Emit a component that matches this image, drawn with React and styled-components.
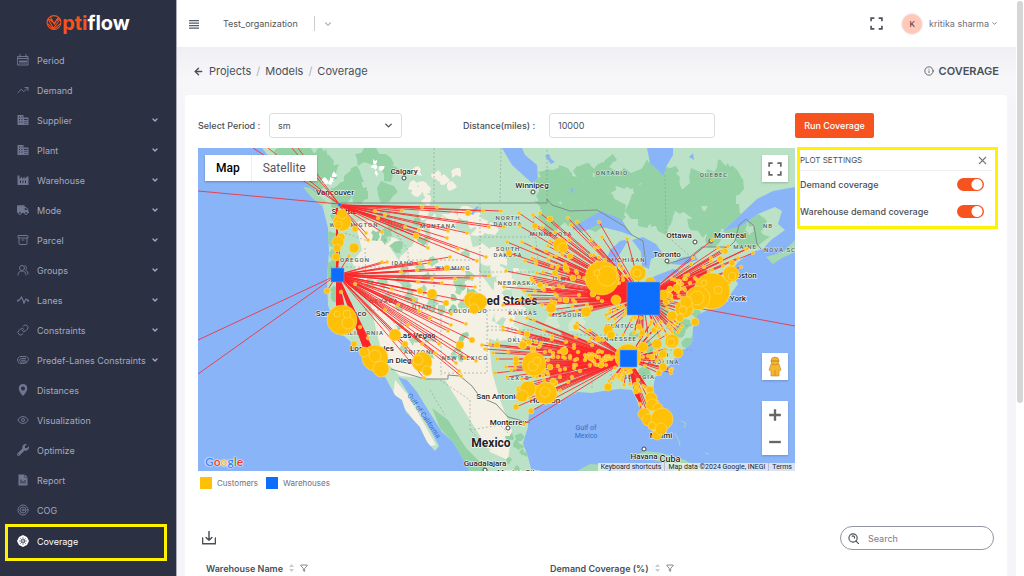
import React from "react";
import styled, { createGlobalStyle, css } from "styled-components";
import { Filter, ChevronDown, Link as LinkIcon, Target, TrendingUp, Archive, Eye, Info, X, ArrowLeft } from "lucide-react";
import { FaTruck, FaWrench } from "react-icons/fa";

const Global = createGlobalStyle`
  * { box-sizing: border-box; }
  body { margin: 0; background: #f5f5f9; font-family: Inter, "Liberation Sans", sans-serif; font-size: 9px; color: #495057; }
  button, input, select { font: inherit; color: inherit; }
  a { color: inherit; text-decoration: none; }
`;

const orange = "#f7531f";
const yellow = "#fff200";

const Shell = styled.div`
  display: flex;
  height: 100vh;
  overflow: hidden;
`;
const Sidebar = styled.nav`
  flex: 0 0 177px;
  background: #2b3042;
  border-right: 1px solid #a9acb8;
  color: #a3aac2;
`;
const Brand = styled.a`
  display: flex;
  align-items: center;
  justify-content: center;
  height: 45px;
  font-size: 20px;
  font-weight: 700;
  line-height: 24px;
  color: #fff;
`;
const BrandAccent = styled.span`
  color: ${orange};
`;
const Menu = styled.ul`
  list-style: none;
  margin: 0;
  padding: 0;
`;
const Item = styled.li`
  ${(p) => p.$active && css`
    margin: -1px 9px 0 5px;
    border: 3px solid ${yellow};
    padding-bottom: 3px;
    color: #fff;
  `}
`;
const ItemLink = styled.a`
  display: flex;
  align-items: center;
  height: ${(p) => (p.$active ? 28 : 30)}px;
  padding: 0 17px 0 ${(p) => (p.$active ? 9 : 17)}px;
  font-size: 9px;
  white-space: nowrap;
  svg:first-child { color: ${(p) => (p.$active ? "#fff" : "#6f7690")}; }
`;
const ItemText = styled.span`
  flex: 1;
  margin-left: 8px;
`;

const Main = styled.div`
  flex: 1;
  min-width: 0;
  background: linear-gradient(#f0f0f4 47px, #f7f7fa 80px, #f5f5f9 110px);
`;
const Topbar = styled.header`
  display: flex;
  align-items: center;
  height: 47px;
  padding: 0 18px 0 12px;
  background: #fff;
`;
const IconButton = styled.button`
  display: grid;
  place-items: center;
  border: 0;
  padding: 0;
  background: none;
  cursor: pointer;
`;
const OrgPicker = styled.button`
  display: flex;
  align-items: center;
  gap: 8px;
  margin-left: 24px;
  border: 0;
  padding: 0;
  background: none;
  color: #555;
`;
const Divider = styled.span`
  width: 1px;
  height: 15px;
  margin-left: 8px;
  background: #ccc;
`;
const Spacer = styled.span`
  flex: 1;
`;
const UserMenu = styled.button`
  display: flex;
  align-items: center;
  margin-left: 19px;
  border: 0;
  padding: 0;
  background: none;
  color: #6c7080;
`;
const UserName = styled.span`
  margin-right: 2px;
`;
const Avatar = styled.span`
  display: grid;
  place-items: center;
  width: 20px;
  height: 20px;
  margin-right: 7px;
  border-radius: 50%;
  background: #ffc8b8;
  color: #333;
  font-size: 8px;
  box-shadow: 0 0 0 1px #f0f0f2;
`;
const PageHead = styled.div`
  display: flex;
  align-items: center;
  height: 48px;
  padding: 0 17px 0 16px;
`;
const Crumbs = styled.nav`
  display: flex;
  align-items: center;
  gap: 5px;
  flex: 1;
  font-size: 11px;
`;
const Slash = styled.span`
  color: #adb0b8;
`;
const Title = styled.h1`
  display: flex;
  align-items: center;
  gap: 5px;
  margin: 0;
  font-size: 11px;
  font-weight: 600;
`;
const Card = styled.main`
  margin: 0 9px 0 8px;
  padding: 18px 9px 0 13px;
  min-height: 100vh;
  border-radius: 3px;
  background: #fff;
`;
const Toolbar = styled.form`
  display: grid;
  grid-template-columns: 265fr 332fr 203fr;
  margin-bottom: 10px;
`;
const Field = styled.div`
  display: flex;
  align-items: center;
`;
const Label = styled.label`
  flex: 0 0 ${(p) => p.$w}px;
  font-size: 9px;
  font-weight: 500;
`;
const SelectWrap = styled.span`
  position: relative;
  flex: 0 0 133px;
  svg { position: absolute; right: 8px; top: 7px; pointer-events: none; }
`;
const boxStyle = css`
  height: 25px;
  border: 1px solid #dcdde1;
  border-radius: 3px;
  padding: 0 8px;
  background: #fff;
  font-size: 9px;
`;
const Select = styled.select`
  ${boxStyle}
  display: block;
  width: 100%;
  appearance: none;
`;
const Input = styled.input`
  ${boxStyle}
  width: 166px;
`;
const RunButton = styled.button`
  height: 25px;
  width: 79px;
  border: 0;
  border-radius: 2px;
  padding: 0;
  background: ${orange};
  color: #fff;
  font-size: 9px;
  font-weight: 500;
`;
const PlotArea = styled.section`
  display: grid;
  grid-template-columns: 597fr 203fr;
  align-items: start;
`;
const MapFrame = styled.div`
  position: relative;
  height: 323px;
  overflow: hidden;
  background: #8ab4f8;
  font-family: Roboto, "Liberation Sans", sans-serif;
  > svg { display: block; width: 100%; height: 100%; }
`;
const MapTypes = styled.div`
  position: absolute;
  top: 7px;
  left: 7px;
  display: flex;
  background: #fff;
  box-shadow: 0 1px 2px #0004;
`;
const MapType = styled.button`
  height: 26px;
  border: 0;
  border-left: ${(p) => (p.$active ? "0" : "1px solid #eee")};
  padding: 0 11px;
  background: #fff;
  font-size: 12px;
  font-weight: ${(p) => (p.$active ? 500 : 400)};
  color: ${(p) => (p.$active ? "#000" : "#565656")};
`;
const MapControls = styled.div`
  position: absolute;
  top: 7px;
  right: 7px;
  bottom: 16px;
  display: flex;
  flex-direction: column;
`;
const MapButton = styled.button`
  display: grid;
  place-items: center;
  width: 26px;
  height: 27px;
  margin-top: ${(p) => p.$top || 0};
  border: 0;
  padding: 0;
  background: #fff;
  color: #666;
  box-shadow: 0 1px 2px #0003;
`;
const Attribution = styled.div`
  position: absolute;
  right: 0;
  bottom: 0;
  display: flex;
  height: 8px;
  background: #f5f5f5b8;
  color: #222;
  font-size: 7px;
  line-height: 8px;
  white-space: nowrap;
  a { padding: 0 3px; }
  a + a { border-left: 1px solid #bbc; }
`;
const GoogleMark = styled.a`
  position: absolute;
  left: 7px;
  bottom: 1px;
  font-family: Lato, sans-serif;
  font-size: 12px;
  line-height: 16px;
  font-weight: 700;
  text-shadow: 0 0 1px #fff, 0 0 1px #fff, 0 0 2px #fff;
`;
const Letter = styled.span`
  color: ${(p) => p.$c};
`;
const Settings = styled.aside`
  margin: -1px 0 0 2px;
  border: 3px solid ${yellow};
  height: 82px;
  padding: 0 11px 0 0;
`;
const SettingsHead = styled.div`
  display: flex;
  align-items: center;
  justify-content: space-between;
  height: 21px;
  margin-right: -8px;
  padding-right: 3px;
  border-bottom: 1px solid #eeeff2;
  font-size: 8px;
  svg { color: #777; }
`;
const SwitchRow = styled.label`
  display: flex;
  align-items: center;
  justify-content: space-between;
  height: 27px;
  font-size: 9px;
  font-weight: 500;
`;
const Switch = styled.input`
  appearance: none;
  width: 27px;
  height: 13px;
  margin: 0;
  border-radius: 7px;
  background: radial-gradient(circle at 20px 50%, #fff 5px, ${orange} 6px);
`;
const Legend = styled.div`
  display: flex;
  gap: 8px;
  padding: 6px 2px 0;
  font-size: 8px;
  color: #6c7080;
`;
const LegendItem = styled.span`
  display: flex;
  align-items: center;
  gap: 5px;
  &::before { content: ""; width: 12px; height: 12px; background: ${(p) => p.$c}; }
`;
const TableTools = styled.div`
  display: flex;
  align-items: center;
  justify-content: space-between;
  margin-top: 37px;
  padding: 0 4px;
`;
const SearchBox = styled.label`
  display: flex;
  align-items: center;
  gap: 9px;
  width: 154px;
  height: 24px;
  border: 1px solid #9295a4;
  border-radius: 12px;
  padding: 0 7px;
`;
const SearchInput = styled.input`
  min-width: 0;
  flex: 1;
  border: 0;
  padding: 0;
  outline: 0;
  background: none;
  font-size: 9px;
  &::placeholder { color: #777b88; }
`;
const Table = styled.table`
  width: 100%;
  margin-top: 9px;
  border-collapse: collapse;
  table-layout: fixed;
`;
const Th = styled.th`
  width: ${(p) => p.$w};
  height: 18px;
  padding: 0 8px;
  text-align: left;
  font-size: 9px;
  font-weight: 600;
`;
const ThInner = styled.span`
  display: flex;
  align-items: center;
  gap: 6px;
`;
const ScrollTrack = styled.div`
  flex: 0 0 8px;
  padding: 1px;
  background: #fff;
`;
const ScrollThumb = styled.div`
  height: 70%;
  border-radius: 3px;
  background: #d6d6d6;
`;

const Svg = ({ s = 12, children, ...rest }) => (
  <svg width={s} height={s} viewBox="0 0 24 24" fill="none" stroke="currentColor" strokeWidth="2" strokeLinecap="round" strokeLinejoin="round" aria-hidden="true" {...rest}>{children}</svg>
);
const CalendarIcon = () => (
  <Svg><path d="M2 5h20v17H2zM6 1v5M18 1v5M2 9h20" /><path d="M6 13v6M10 13v6M14 13v6M18 13v6M5 15h14" /></Svg>
);
const BuildingIcon = () => (
  <Svg stroke="none"><path fill="currentColor" fillRule="evenodd" d="M1 2h12v5h10v15H1zM4 5v2h2V5zM9 5v2h2V5zM4 10v2h2v-2zM9 10v2h2v-2zM4 15v2h2v-2zM9 15v2h2v-2zM14 10v2h7v-2zM14 14v1h7v-1zM14 18v1h7v-1z" /></Svg>
);
const FactoryIcon = () => (
  <Svg stroke="none"><path fill="currentColor" fillRule="evenodd" d="M1 3h4v7l5-5v5l5-5v5l5-5h3v17H1zM6 13v5h2v-5zM11 13v5h2v-5zM16 13v5h2v-5z" /></Svg>
);
const PeopleIcon = () => (
  <Svg><circle cx="10" cy="8" r="5" /><path d="M2 22c0-5 3-8 8-8s8 3 8 8M16 3c4 1 4 7 1 9 4 2 5 5 5 8" /></Svg>
);
const ZigzagIcon = () => (
  <Svg strokeWidth="2.5"><path d="M2 13l3-1 4-6 5 11 4-7 4 3" /><g fill="currentColor"><circle cx="2" cy="13" r="1" /><circle cx="14" cy="17" r="1" /><circle cx="22" cy="13" r="1" /></g></Svg>
);
const ClipIcon = () => (
  <Svg><path d="M20 17c-3 2-8 2-12 2-9 0-9-14 0-14h8c9 0 9 11 0 11H9c-5 0-5-7 0-7h8M9 12.500h8" /></Svg>
);
const ReportIcon = () => (
  <Svg stroke="none"><path fill="currentColor" fillRule="evenodd" d="M3 1h12v6h6v16H3zM7 11v8h2v-8zM11 14v5h2v-5zM15 12v7h2v-7zM16 1l5 5h-5z" /></Svg>
);
const CoverageIcon = () => (
  <Svg stroke="none"><path fill="currentColor" d="M12 0l4 2 4 2 2 4 2 4-2 4-2 4-4 2-4 2-4-2-4-2-2-4-2-4 2-4 2-4 4-2z" /><g stroke="#4d5265" strokeWidth="1.500"><circle cx="12" cy="12" r="3" /><path d="M12 5v4M12 15v4M5 12h4M15 12h4M7 7l3 3M17 7l-3 3M7 17l3-3M17 17l-3-3" /></g></Svg>
);
const CornersIcon = ({ s, w }) => (
  <Svg s={s} strokeWidth={w} strokeLinecap="butt" strokeLinejoin="miter"><path d="M2 8V2h6M16 2h6v6M22 16v6h-6M8 22H2v-6" /></Svg>
);

const icon = 12;
const menu = [
  ["Period", <CalendarIcon />],
  ["Demand", <TrendingUp size={icon} />],
  ["Supplier", <BuildingIcon />, true],
  ["Plant", <BuildingIcon />, true],
  ["Warehouse", <FactoryIcon />, true],
  ["Mode", <FaTruck size={icon} />, true],
  ["Parcel", <Archive size={icon} />, true],
  ["Groups", <PeopleIcon />, true],
  ["Lanes", <ZigzagIcon />, true],
  ["Constraints", <LinkIcon size={icon} />, true],
  ["Predef-Lanes Constraints", <ClipIcon />, true],
  ["Distances", <Svg stroke="none"><path fill="currentColor" fillRule="evenodd" d="M12 0a8.500 8.500 0 0 0-8.500 9C3.500 15 12 24 12 24s8.500-9 8.500-15A8.500 8.500 0 0 0 12 0zM12 5a4 4 0 1 1 0 8 4 4 0 0 1 0-8z" /></Svg>],
  ["Visualization", <Eye size={icon} />],
  ["Optimize", <FaWrench size={icon} />],
  ["Report", <ReportIcon />],
  ["COG", <Target size={icon} />],
  ["Coverage", <CoverageIcon />],
];

/* Map data, in the map drawing's own coordinates */
const hubs = { A: [339, 205], B: [337, 275], C: [643, 298], D: [628, 359] };
const routes = {
  A: [[422,207],[437,207],[402,211],[468,213],[483,211],[501,211],[489,227],[504,227],[467,233],[448,231],[405,227],[419,230],[416,236],[447,238],[428,248],[458,249],[486,257],[477,261],[375,211],[378,218],[385,215],[355,229],[366,233],[368,240],[382,232]],
  B: [[450,257],[420,263],[429,263],[417,270],[401,272],[447,268],[463,269],[489,276],[472,278],[455,279],[432,279],[442,283],[418,282],[475,287],[420,291],[432,294],[475,303],[419,311],[451,314],[451,325],[466,324],[448,331],[439,344],[472,340],[460,345],[456,363],[459,371],[461,376],[465,358],[476,361],[422,344],[435,353],[405,344],[424,378],[398,335],[422,362],[427,371],[382,262],[387,262],[349,256],[341,237],[327,291],[341,292],[355,284],[392,289],[345,320],[375,358],[365,352],[360,327],[368,338],[446,303],[408,325],[414,300],[430,318],[385,310],[398,305]],
  C: [[519,213],[533,215],[540,213],[550,219],[568,218],[571,225],[577,222],[591,240],[599,222],[602,237],[627,239],[520,226],[535,226],[542,227],[555,232],[569,240],[507,242],[522,242],[533,248],[548,246],[525,261],[509,253],[506,271],[531,278],[504,287],[503,305],[536,264],[556,256],[548,260],[537,273],[555,273],[565,270],[524,291],[535,291],[553,288],[520,300],[560,300],[712,240],[728,246],[725,251],[711,258],[693,258],[746,249],[753,253],[747,249],[738,258],[741,267]],
  D: [[482,345],[490,344],[497,345],[493,353],[508,352],[497,359],[495,373],[485,349],[503,327],[511,320],[524,424],[531,411],[516,407],[503,330],[519,332],[527,318],[534,320],[507,377],[506,367],[511,370],[516,363],[546,393],[522,396],[544,330],[548,374],[560,370],[552,336],[540,345],[545,352],[533,349]],
};
const discs = [[342,222,9],[342,214,5],[338,225,4],[341,237,4],[338,242,6],[337,248,4],[336,257,4],[354,248,5],[342,320,15],[348,323,6],[347,314,4],[337,314,3],[375,358,13],[381,369,8],[364,352,5],[375,356,6],[354,344,3],[395,335,6],[422,362,10],[418,360,5],[427,371,5],[460,345,4],[432,294,5],[420,291,3],[472,300,8],[478,302,9],[474,309,5],[534,364,12],[533,366,5],[537,361,4],[528,389,8],[522,396,6],[546,393,11],[545,392,5],[516,407,3],[523,345,4],[529,342,3],[564,351,4],[560,245,7],[563,248,5],[540,285,3],[551,308,5],[586,312,5],[602,278,17],[607,276,10],[597,273,3],[638,273,8],[637,273,4],[650,282,5],[663,295,5],[616,300,5],[712,291,18],[698,298,12],[697,298,7],[684,309,9],[686,302,6],[683,310,4],[704,283,3],[718,290,4],[731,274,8],[732,276,4],[732,263,3],[628,357,13],[650,390,4],[651,398,6],[644,414,6],[652,405,6],[658,408,5],[648,420,6],[662,419,11],[657,435,5],[661,429,6],[652,426,4],[672,341,7],[671,342,4],[657,344,5],[643,347,5],[663,354,4],[678,353,5],[663,367,4],[695,322,4],[608,330,5],[611,335,4],[608,387,4],[672,316,5],[680,318,4],[650,309,5],[677,288,4]];

function makeRandom(seed) {
  let n = seed;
  return () => ((n = (n * 16807) % 2147483647) / 2147483647);
}
const random = makeRandom(4217);
const scatter = (hub, count, a0, a1, r0, r1) => {
  const [hx, hy] = hubs[hub];
  for (let i = 0; i < count; i += 1) {
    const a = ((a0 + random() * (a1 - a0)) * Math.PI) / 180;
    const r = r0 + random() * (r1 - r0);
    routes[hub].push([Math.round(hx + Math.cos(a) * r), Math.round(hy + Math.sin(a) * r)]);
  }
};
scatter("C", 65, 168, 212, 40, 118);
scatter("C", 26, 205, 235, 25, 70);
scatter("C", 40, -36, -8, 25, 95);
scatter("C", 34, -20, 60, 20, 52);
scatter("C", 32, 60, 170, 20, 42);
scatter("D", 58, 153, 195, 45, 115);
scatter("D", 22, 165, 190, 15, 45);
scatter("D", 24, 180, 218, 20, 65);
scatter("D", 28, -60, 25, 15, 48);
scatter("D", 20, 50, 150, 12, 30);
scatter("D", 12, 52, 76, 30, 75);

const patch = (cx, cy, w, h, count, size) =>
  Array.from({ length: count }, () => {
    const x = cx + (random() - 0.5) * w;
    const y = cy + (random() - 0.5) * h;
    const pts = Array.from({ length: 9 }, (_, i) => {
      const a = (i / 9) * Math.PI * 2;
      const r = size * (0.4 + random() * 0.8);
      return `${Math.round(x + Math.cos(a) * r)} ${Math.round(y + Math.sin(a) * r)}`;
    });
    return `M${pts.join("L")}Z`;
  }).join("");
const tan = "#f5f0e4";
const terrain = [
  ["#94d2a5", patch(335, 172, 110, 50, 30, 11)],
  ["#fff", patch(328, 179, 14, 10, 5, 3)],
  ["#fff", patch(380, 165, 12, 20, 5, 3)],
  [tan, patch(440, 185, 55, 30, 11, 6)],
  [tan, "M355 222L362 250L352 262L370 300L376 330L384 360L400 376L445 380L490 452L508 460L512 430L500 400L492 372L488 330L500 300L478 270L470 235L440 222L425 250L400 262L385 240L372 220Z"],
  [tan, patch(445, 240, 110, 65, 34, 9)],
  [tan, patch(500, 310, 40, 80, 24, 9)],
  [tan, "M395 380L408 395L422 420L436 445L430 446L410 415L393 396Z"],
  ["#94d2a5", patch(334, 250, 12, 100, 14, 7)],
  ["#94d2a5", patch(400, 235, 50, 40, 10, 6)],
  ["#a9dab5", patch(425, 280, 110, 60, 26, 6)],
  ["#94d2a5", patch(465, 325, 30, 80, 9, 5)],
  ["#a9dab5", patch(430, 345, 60, 40, 9, 5)],
  ["#94d2a5", patch(640, 197, 190, 55, 75, 14)],
  ["#94d2a5", patch(745, 225, 70, 35, 12, 10)],
  ["#94d2a5", patch(575, 195, 65, 60, 20, 9)],
  ["#bbe2c6", patch(700, 158, 180, 16, 22, 8)],
  ["#94d2a5", patch(660, 345, 70, 90, 16, 8)],
  ["#94d2a5", "M432 408L448 420L466 448L490 472H468L455 445L440 428Z"],
  ["#94d2a5", patch(515, 450, 16, 40, 8, 5)],
  ["#cfe8cf", patch(560, 300, 90, 60, 12, 9)],
];

const land = "M262 148L270 158L285 168L305 182L317 192L323 208L328 228L329 252L327 278L328 305L335 328L352 343L362 353L373 371L385 377L395 395L402 400L406 412L420 427L427 442L435 451L439 446L432 433L423 417L415 403L408 393L398 377L407 380L417 392L428 410L442 432L453 442L462 457L470 472L532 472L528 457L523 443L528 427L529 413L538 407L562 400L578 392L592 393L603 391L620 389L632 390L638 403L642 413L648 425L657 438L667 433L664 420L657 403L653 390L655 377L667 368L678 355L692 343L693 328L697 315L725 302L738 284L731 272L738 262L752 252L763 249L771 240L778 235L785 230L778 224L782 211L775 207L758 214L742 226L722 232L740 215L757 199L773 191L795 187V148Z";
const water = [
  "M647 148L650 163L658 170L663 176L667 165L673 155V148Z",
  "M502 148L512 165L523 175L532 183L538 178L537 165L525 155L522 148Z",
  "M572 229L585 220L601 211L614 216L622 220L632 236L622 232L610 229L597 225L585 231Z",
  "M607 283L604 267L610 250L620 241L629 239L618 257L618 275L613 284Z",
  "M632 240L643 237L656 244L663 254L651 259L649 269L642 266L641 252Z",
  "M643 284L655 276L673 269L680 271L664 280L651 286Z",
  "M671 264L680 258L695 255L698 260L683 265Z",
  "M545 156l4-2 2 5 4 3-4 2zM470 214l7-8 2 1-6 8zM570 190l3-2 1 6zM689 157l4-4 1 7zM770 170l3-4 1 5z",
];
const dashed = "M434 148V203M501 148L500 203M547 150V203M665 175L666 235L690 256M480 203V272M480 237H535M533 213L538 260M480 257V310M480 272H540M395 208V232L408 250V273M408 260H480M434 273V310M408 273V310M365 310H535M365 248L366 290L400 330M441 310V375M487 310V373H441M487 330H535M487 326L515 328V343L540 350M345 233L365 240H387M330 267H408M540 289L590 292M545 310L590 312M540 335H620M590 350H692M592 350V390M611 350V385M643 373L655 378M650 330L692 325M590 270H615M440 380L470 400V430L490 450M470 430L500 425L515 440M430 390L445 415";
const states = [["ONTARIO",612,175],["QUEBEC",714,177],["NB",768,228],["NOVA SC",780,252],["MAINE",745,249],["NORTH",508,220],["DAKOTA",508,226],["MINNESOTA",551,236],["SOUTH",508,251],["DAKOTA",508,257],["MONTANA",438,228],["WASHINGTON",354,227],["OREGON",355,262],["IDAHO",403,265],["WYOMING",453,270],["NEBRASKA",517,285],["IOWA",562,281],["NEVADA",384,303],["UTAH",422,309],["COLORADO",468,313],["KANSAS",523,315],["MISSOURI",567,317],["MICHIGAN",627,262],["CALIFORNIA",362,335],["OKLAHOMA",528,342],["ARIZONA",420,354],["NEW MEXICO",465,360],["TEXAS",518,380],["KENTUCKY",625,328],["TENNESSEE",616,341],["SOUTH",657,357],["CAROLINA",661,364],["GEORGIA",639,379]];
const cities = [["Calgary",404,174],["Winnipeg",532,188],["Vancouver",335,195],["Seattle",344,214],["Ottawa",679,238],["Montreal",730,238],["Toronto",667,257],["Boston",744,278],["New York",729,301],["San Francisco",341,316],["Los Angeles",372,351],["Las Vegas",417,338],["San Diego",398,363],["San Antonio",498,399],["Houston",545,403],["Monterrey",508,425],["Guadalajara",485,466],["Miami",661,438],["Havana",644,459]];
const marks = [[404,178],[533,192],[695,242],[711,241],[667,261],[508,428],[485,470],[644,449]];

const Place = styled.text`
  font-family: Roboto, "Liberation Sans", sans-serif;
  font-size: ${(p) => p.$size}px;
  font-weight: ${(p) => p.$weight || 500};
  fill: ${(p) => p.$color || "#222"};
  text-anchor: middle;
  paint-order: stroke;
  stroke: ${(p) => p.$halo || "#fff"};
  stroke-width: 1px;
`;

function CoverageMap() {
  return (
    <svg viewBox="198 148 597 323" preserveAspectRatio="xMidYMid slice" role="img" aria-label="Coverage map">
      <defs><clipPath id="land"><path d={land} /></clipPath></defs>
      <path d={land} fill="#bbe2c6" />
      <g clipPath="url(#land)">{terrain.map(([c, d], i) => <path key={i} d={d} fill={c} />)}</g>
      <path d="M303 187L310 188L327 202L322 206L312 198ZM630 457L645 451L662 453L685 460L706 472H675L662 462L645 458ZM575 472L590 464L605 465V472ZM766 257L783 252L795 240V252L782 258L773 264Z" fill="#a5d9b2" />
      <path d="M675 433l4 8 1 5M681 421l5 2-2 5M705 453l4 1" stroke="#a5d9b2" fill="none" />
      {water.map((d, i) => <path key={i} d={d} fill="#8ab4f8" />)}
      <path d={dashed} stroke="#8b9d92" strokeWidth="1" strokeDasharray="2 2" fill="none" opacity=".6" />
      <path d="M341 203H547V199L552 205L570 211L597 210L624 226L632 235L643 241L646 265M667 264L690 257L702 247H729L735 241L739 225L746 219L754 226L757 244L761 249M391 369L425 379H448V375L460 376L472 386L480 397L496 404L508 417L530 423" stroke="#7d8e87" fill="none" />
      {states.map(([t, x, y], i) => <Place key={i} x={x} y={y} $size={6} letterSpacing="1" $color="#4c5b56" $halo="#ffffffa0">{t}</Place>)}
      {cities.map(([t, x, y]) => <Place key={t} x={x} y={y} $size={8}>{t}</Place>)}
      <Place x={501} y={305} $size={12} $weight={700}>United States</Place>
      <Place x={491} y={447} $size={12} $weight={700}>Mexico</Place>
      <Place x={518} y={475} $size={8}>Mexico City</Place>
      <Place x={670} y={462} $size={9}>Cuba</Place>
      <Place x={586} y={430} $size={7} $weight={400} $color="#2f6fca" $halo="none">Gulf of</Place>
      <Place x={586} y={438} $size={7} $weight={400} $color="#2f6fca" $halo="none">Mexico</Place>
      <Place x={0} y={0} transform="translate(422 417) rotate(55)" $size={7} $weight={400} $color="#2f6fca" $halo="none">Gulf of California</Place>
      {marks.map(([x, y]) => <circle key={`${x}-${y}`} cx={x} cy={y} r="2" fill="#fff" stroke="#444" />)}
      <g stroke="#ff2427" strokeWidth="1" fill="none">
        {Object.entries(routes).map(([h, list]) => <path key={h} d={list.map(([x, y]) => `M${hubs[h][0]} ${hubs[h][1]}L${x} ${y}`).join("")} opacity=".85" />)}
        <path d="M339 204L198 191M339 204L253 148M339 204L268 148M339 204L292 148M339 204L298 148M337 275L198 340M337 275L198 374M643 298L795 326" opacity=".8" />
      </g>
      <path d="M337 275L337 208M337 275L346 318L337 318ZM337 275L376 358L366 352ZM628 359L642 405L636 395ZM628 359L652 396" fill="#ff2427" stroke="#ff2427" strokeWidth="2" />
      <path d="M628 359L560 330L567 348L549 360L550 378L590 374ZM643 298L585 276L590 312ZM643 298L705 268L716 284L678 300ZM628 359L545 388L590 360Z" fill="#ff2427" opacity=".6" />
      <g fill="#ffc107" stroke="#ffe082" strokeWidth=".5">
        {Object.values(routes).flat().map(([x, y], i) => <circle key={i} cx={x} cy={y} r={i % 9 === 3 ? 3 : 1.8} />)}
        {discs.map(([x, y, r], i) => <circle key={i} cx={x} cy={y} r={r} />)}
      </g>
      <g fill="#0d6efd" stroke="#7aa7e8" strokeWidth=".5">
        <rect x="338" y="203" width="3" height="3" />
        <rect x="331" y="268" width="13" height="14" />
        <rect x="627" y="282" width="33" height="33" />
        <rect x="620" y="350" width="17" height="17" />
      </g>
    </svg>
  );
}

const Sorter = () => (
  <svg width="5" height="8" viewBox="0 0 5 8" fill="#c9cbd1" aria-hidden="true"><path d="M0 3L2.500 0L5 3ZM0 5L2.500 8L5 5Z" /></svg>
);

export default function App() {
  return (
    <Shell>
      <Global />
      <Sidebar>
        <Brand href="#" aria-label="Optiflow">
          <svg width="16" height="17" viewBox="0 0 30 32" fill="none" stroke={orange} strokeWidth="2" aria-hidden="true">
            <circle cx="15" cy="16" r="13" /><path d="M4 10l10 17L27 9M8 5l7 13L24 6M3 18l10 10M28 17L15 29M3 9l7 3 6 7 5-9 6-1" /><circle cx="10" cy="12" r="1" /><circle cx="21" cy="11" r="1" />
          </svg>
          <BrandAccent>pti</BrandAccent>flow
        </Brand>
        <Menu>
          {menu.map(([name, glyph, open]) => {
            const active = name === "Coverage";
            return (
              <Item key={name} $active={active}>
                <ItemLink href="#" $active={active}>
                  {glyph}
                  <ItemText>{name}</ItemText>
                  {open && <ChevronDown size={8} strokeWidth={4} />}
                </ItemLink>
              </Item>
            );
          })}
        </Menu>
      </Sidebar>
      <Main>
        <Topbar>
          <IconButton aria-label="Toggle menu">
            <svg width="10" height="10" viewBox="0 0 10 10" fill="#555b6d"><path d="M0 1h10v1.300H0zM0 3.500h10v1.300H0zM0 6h10v1.300H0zM0 8.500h10v1.300H0z" /></svg>
          </IconButton>
          <OrgPicker>Test_organization<Divider /><ChevronDown size={10} strokeWidth={3} color="#bbb" /></OrgPicker>
          <Spacer />
          <IconButton aria-label="Full screen"><CornersIcon s={13} w={3} /></IconButton>
          <UserMenu><Avatar>K</Avatar><UserName>kritika sharma</UserName><ChevronDown size={7} strokeWidth={3} /></UserMenu>
        </Topbar>
        <PageHead>
          <Crumbs aria-label="Breadcrumb">
            <ArrowLeft size={11} strokeWidth={3} />
            <a href="#">Projects</a><Slash>/</Slash><a href="#">Models</a><Slash>/</Slash><a href="#">Coverage</a>
          </Crumbs>
          <Title><Info size={10} />COVERAGE</Title>
        </PageHead>
        <Card>
          <Toolbar onSubmit={(e) => e.preventDefault()}>
            <Field>
              <Label $w={71} htmlFor="period">Select Period :</Label>
              <SelectWrap>
                <Select id="period"><option>sm</option></Select>
                <ChevronDown size={11} strokeWidth={3} />
              </SelectWrap>
            </Field>
            <Field>
              <Label $w={86} htmlFor="distance">Distance(miles) :</Label>
              <Input id="distance" defaultValue="10000" />
            </Field>
            <Field><RunButton>Run Coverage</RunButton></Field>
          </Toolbar>
          <PlotArea>
            <MapFrame>
              <CoverageMap />
              <MapTypes><MapType $active>Map</MapType><MapType>Satellite</MapType></MapTypes>
              <MapControls>
                <MapButton aria-label="Full screen map"><CornersIcon s={14} w={3} /></MapButton>
                <MapButton $top="auto" aria-label="Street View">
                  <svg width="14" height="22" viewBox="0 0 14 22" fill="#f5b52e" stroke="#b9852a" strokeWidth=".6"><path d="M3 8h8l2 6-2 1v5H3v-5l-2-1z" /><circle cx="7" cy="5" r="4" /><path d="M3 5h8" stroke="#8f6b2c" /><path d="M7 14v6" /></svg>
                </MapButton>
                <MapButton $top="21px" aria-label="Zoom in"><Svg s={14} strokeWidth="4" strokeLinecap="butt"><path d="M12 2v20M2 12h20" /></Svg></MapButton>
                <MapButton aria-label="Zoom out"><Svg s={14} strokeWidth="4" strokeLinecap="butt"><path d="M2 12h20" /></Svg></MapButton>
              </MapControls>
              <GoogleMark href="#" aria-label="Google">
                <Letter $c="#4285f4">G</Letter><Letter $c="#ea4335">o</Letter><Letter $c="#fbbc05">o</Letter><Letter $c="#4285f4">g</Letter><Letter $c="#34a853">l</Letter><Letter $c="#ea4335">e</Letter>
              </GoogleMark>
              <Attribution><a href="#">Keyboard shortcuts</a><a href="#">Map data ©2024 Google, INEGI</a><a href="#">Terms</a></Attribution>
            </MapFrame>
            <Settings>
              <SettingsHead>PLOT SETTINGS<IconButton aria-label="Close"><X size={13} /></IconButton></SettingsHead>
              <SwitchRow>Demand coverage<Switch type="checkbox" role="switch" defaultChecked /></SwitchRow>
              <SwitchRow>Warehouse demand coverage<Switch type="checkbox" role="switch" defaultChecked /></SwitchRow>
            </Settings>
          </PlotArea>
          <Legend><LegendItem $c="#ffc107">Customers</LegendItem><LegendItem $c="#0d6efd">Warehouses</LegendItem></Legend>
          <TableTools>
            <IconButton aria-label="Download"><Svg s={14} strokeWidth="2.500"><path d="M1 12v10h22V12M12 1v15M7 11l5 5 5-5" /></Svg></IconButton>
            <SearchBox>
              <Svg s={11} strokeWidth="2.500"><circle cx="11" cy="11" r="9" /><path d="M17 17l6 6M9 7c3-2 6 1 5 4" /></Svg>
              <SearchInput type="search" placeholder="Search" aria-label="Search" />
            </SearchBox>
          </TableTools>
          <Table>
            <thead>
              <tr>
                <Th $w="43%"><ThInner>Warehouse Name<Sorter /><Filter size={8} /></ThInner></Th>
                <Th><ThInner>Demand Coverage (%)<Sorter /><Filter size={8} /></ThInner></Th>
              </tr>
            </thead>
          </Table>
        </Card>
      </Main>
      <ScrollTrack><ScrollThumb /></ScrollTrack>
    </Shell>
  );
}
